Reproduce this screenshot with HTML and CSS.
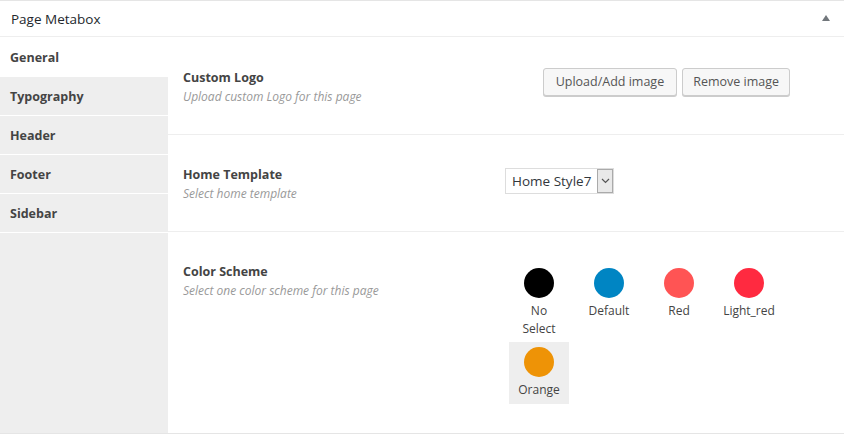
FILE: index.html
```html
<!DOCTYPE html>
<html>
<head>
<meta charset="utf-8">
<link rel="stylesheet" href="styles.css">
</head>
<body>
<div class="metabox">
  <div class="mb-header">
    <h2 class="mb-title">Page Metabox</h2>
    <span class="mb-toggle"></span>
  </div>
  <div class="mb-body">
    <ul class="tabs">
      <li class="tab active">General</li>
      <li class="tab">Typography</li>
      <li class="tab">Header</li>
      <li class="tab">Footer</li>
      <li class="tab">Sidebar</li>
    </ul>
    <div class="panel">
      <div class="row">
        <div class="label">
          <div class="title">Custom Logo</div>
          <div class="desc">Upload custom Logo for this page</div>
        </div>
        <div class="field field-right">
          <button class="btn">Upload/Add image</button>
          <button class="btn">Remove image</button>
        </div>
      </div>
      <div class="row">
        <div class="label">
          <div class="title">Home Template</div>
          <div class="desc">Select home template</div>
        </div>
        <div class="field">
          <div class="select">
            <span class="select-text">Home Style7</span>
            <span class="select-arrow">
              <svg width="9" height="6" viewBox="0 0 9 6"><path d="M1 1 L4.5 4.5 L8 1" fill="none" stroke="#555" stroke-width="1.2"/></svg>
            </span>
          </div>
        </div>
      </div>
      <div class="row row-last">
        <div class="label">
          <div class="title">Color Scheme</div>
          <div class="desc">Select one color scheme for this page</div>
        </div>
        <div class="field">
          <div class="swatches">
            <div class="swatch"><span class="dot dot-black"></span><span class="sw-label">No Select</span></div>
            <div class="swatch"><span class="dot dot-blue"></span><span class="sw-label">Default</span></div>
            <div class="swatch"><span class="dot dot-red"></span><span class="sw-label">Red</span></div>
            <div class="swatch"><span class="dot dot-lightred"></span><span class="sw-label">Light_red</span></div>
            <div class="swatch selected"><span class="dot dot-orange"></span><span class="sw-label">Orange</span></div>
          </div>
        </div>
      </div>
    </div>
  </div>
</div>
</body>
</html>
```

FILE: styles.css
```css
* { box-sizing: border-box; }
html, body { margin: 0; padding: 0; background: #fff; }
body {
  font-family: "Open Sans", "Noto Sans", sans-serif;
  font-size: 13px;
  color: #444;
}
.metabox {
  border-top: 1px solid #e5e5e5;
  border-bottom: 1px solid #e5e5e5;
  background: #fff;
}
.mb-header {
  height: 36px;
  border-bottom: 1px solid #eee;
  display: flex;
  align-items: center;
  justify-content: space-between;
  padding: 1px 12px 0 11px;
}
.mb-title {
  margin: 0;
  font-size: 13.5px;
  font-weight: 400;
  color: #23282d;
}
.mb-toggle {
  width: 0; height: 0;
  border-left: 4px solid transparent;
  border-right: 4px solid transparent;
  border-bottom: 6px solid #72777c;
  margin-right: 2px;
  margin-top: -2px;
}
.mb-body {
  display: flex;
  padding-top: 1px;
}
.tabs {
  list-style: none;
  margin: 0;
  padding: 0;
  width: 168px;
  flex: none;
  background: #eee;
}
.tab {
  height: 39px;
  border-bottom: 1px solid #fff;
  padding: 1px 10px 0;
  display: flex;
  align-items: center;
  font-weight: 700;
  font-size: 12.5px;
  color: #444;
}
.tab.active { background: #fff; }
.panel {
  flex: 1;
  min-width: 0;
}
.row {
  display: flex;
  padding: 31px 15px 28px;
  border-bottom: 1px solid #eee;
}
.row-last { border-bottom: none; padding-bottom: 29px; }
.label {
  width: 322px;
  flex: none;
}
.title {
  font-weight: 700;
  font-size: 12.5px;
  line-height: 18px;
  color: #444;
}
.desc {
  font-style: italic;
  font-size: 12px;
  line-height: 19px;
  color: #999;
}
.field {
  width: 285px;
  flex: none;
}
.field-right {
  display: flex;
  justify-content: flex-end;
  align-items: flex-start;
  gap: 5px;
  margin-top: -1px;
}
.btn {
  font-family: inherit;
  font-size: 12.5px;
  color: #555;
  background: #f7f7f7;
  border: 1px solid #ccc;
  border-radius: 3px;
  box-shadow: 0 1px 0 #ccc;
  height: 28px;
  padding: 0 10px;
  line-height: 26px;
  white-space: nowrap;
}
.btn:first-child { padding: 0 12px; }
.select {
  margin-top: 2px;
  display: inline-flex;
  align-items: stretch;
  height: 26px;
  border: 1px solid #ddd;
  background: #fff;
}
.select-text {
  padding: 0 6px;
  font-size: 13.5px;
  line-height: 24px;
  color: #32373c;
}
.select-arrow {
  width: 16px;
  background: #e9e9e9;
  border: 1px solid #aaa;
  display: flex;
  align-items: center;
  justify-content: center;
}
.swatches {
  display: flex;
  flex-wrap: wrap;
  column-gap: 10px;
  padding-left: 4px;
}
.swatch {
  width: 60px;
  padding: 5px 0 4px;
  display: flex;
  flex-direction: column;
  align-items: center;
  text-align: center;
}
.swatch.selected { background: #eee; padding-bottom: 5px; }
.dot {
  width: 30px;
  height: 30px;
  border-radius: 50%;
  display: block;
  margin-bottom: 4px;
}
.dot-black { background: #000; }
.dot-blue { background: #0085c3; }
.dot-red { background: #ff5454; }
.dot-lightred { background: #ff2a40; }
.dot-orange { background: #ee9306; }
.sw-label {
  font-size: 12px;
  line-height: 18px;
  color: #444;
  padding: 0 4px;
}
```
